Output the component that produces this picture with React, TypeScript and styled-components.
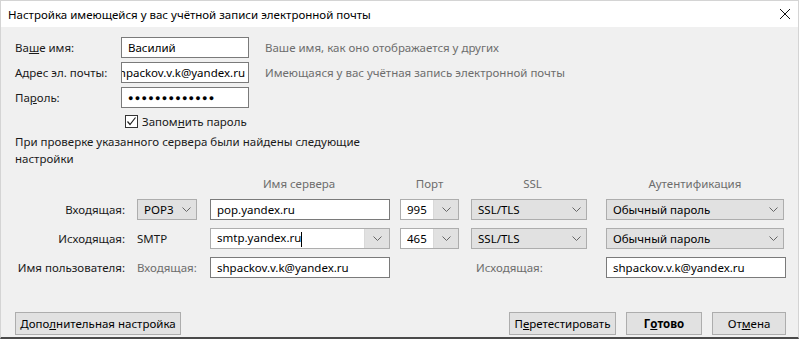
import React from 'react';
import styled, { createGlobalStyle } from 'styled-components';

const GlobalStyle = createGlobalStyle`
  html, body {
    margin: 0;
    padding: 0;
    background: #f0f0f0;
  }
  body {
    font-family: 'Noto Sans', 'Open Sans', sans-serif;
    font-size: 11.5px;
    color: #1a1a1a;
  }
`;

const Window = styled.div`
  width: 799px;
  height: 339px;
  box-sizing: border-box;
  display: flex;
  flex-direction: column;
  background: #f0f0f0;
  border-left: 1px solid #d4d4d4;
  border-right: 1px solid #d4d4d4;
  border-top: 1px solid #d4d4d4;
  border-bottom: 2px solid #4a4a4a;
  overflow: hidden;
`;

const TitleBar = styled.div`
  height: 26px;
  flex: none;
  background: #fff;
  display: flex;
  align-items: center;
  justify-content: space-between;
  padding: 0 7px 0 7px;
  font-size: 11.5px;
  color: #000;
`;

const CloseButton = styled.div`
  width: 12px;
  height: 12px;
  display: flex;
`;

const Content = styled.div`
  flex: 1;
  display: flex;
  flex-direction: column;
  padding: 10px 0 0 14px;
`;

const AccountGrid = styled.div`
  display: grid;
  grid-template-columns: 106px 128px auto;
  grid-auto-rows: 21px;
  row-gap: 4px;
  align-items: center;
`;

const Label = styled.span<{ $muted?: boolean; $right?: boolean; $indent?: number }>`
  white-space: nowrap;
  color: ${(p) => (p.$muted ? '#6d6d6d' : '#1a1a1a')};
  text-align: ${(p) => (p.$right ? 'right' : 'left')};
  padding-left: ${(p) => p.$indent ?? 0}px;
`;

const TextBox = styled.div<{ $clipStart?: boolean }>`
  box-sizing: border-box;
  height: 21px;
  width: 100%;
  background: #fff;
  border: 1px solid #7a7a7a;
  display: flex;
  align-items: center;
  justify-content: ${(p) => (p.$clipStart ? 'flex-end' : 'flex-start')};
  padding: 0 3px 0 6px;
  overflow: hidden;
  white-space: nowrap;
  color: #000;
`;

const Dots = styled.span`
  font-size: 9px;
  letter-spacing: 1.3px;
  color: #000;
`;

const Caret = styled.span`
  display: inline-block;
  width: 1px;
  height: 15px;
  background: #000;
  vertical-align: middle;
`;

const CheckRow = styled.label`
  display: flex;
  align-items: center;
  gap: 4px;
  margin: 6px 0 0 110px;
  height: 14px;
`;

const CheckBox = styled.span`
  box-sizing: border-box;
  width: 13px;
  height: 13px;
  border: 1px solid #333;
  background: #fff;
  display: flex;
  align-items: center;
  justify-content: center;
`;

const Note = styled.p`
  margin: 5px 0 0 0;
  line-height: 17px;
`;

const ServerGrid = styled.div`
  display: grid;
  grid-template-columns: 110px 61px 178px 59px 123px 178px;
  grid-template-rows: 16px 21px 21px 21px;
  column-gap: 12px;
  row-gap: 8px;
  align-items: center;
  margin-top: 8px;
`;

const Header = styled.span<{ $col: number }>`
  grid-column: ${(p) => p.$col};
  color: #6d6d6d;
  text-align: center;
  white-space: nowrap;
`;

const Select = styled.div<{ $w?: number; $white?: boolean }>`
  box-sizing: border-box;
  height: 21px;
  width: ${(p) => (p.$w ? `${p.$w}px` : '100%')};
  background: ${(p) => (p.$white ? '#fff' : '#e1e1e1')};
  border: 1px solid #adadad;
  display: flex;
  align-items: center;
  padding-left: 6px;
  color: #000;
  white-space: nowrap;
`;

const SelectValue = styled.span`
  flex: 1;
  overflow: hidden;
`;

const Arrow = styled.span<{ $bg?: boolean }>`
  flex: none;
  width: ${(p) => (p.$bg ? '24px' : '20px')};
  height: 100%;
  display: flex;
  align-items: center;
  justify-content: center;
  background: ${(p) => (p.$bg ? '#e1e1e1' : 'transparent')};
  border-left: ${(p) => (p.$bg ? '1px solid #d9d9d9' : 'none')};
`;

const ServerBox = styled(Select)`
  width: 180px;
  border-color: #7a7a7a;
  background: #fff;
`;

const ServerCombo = styled(Select)`
  width: 180px;
  background: #fff;
`;

const Footer = styled.div`
  margin-top: auto;
  display: flex;
  align-items: center;
  gap: 10px;
  padding: 0 12px 2px 0;
`;

const Button = styled.div<{ $w: number; $bold?: boolean }>`
  box-sizing: border-box;
  width: ${(p) => p.$w}px;
  height: 23px;
  background: #e1e1e1;
  border: 1px solid #adadad;
  display: flex;
  align-items: center;
  justify-content: center;
  font-weight: ${(p) => (p.$bold ? 700 : 400)};
  color: #000;
  white-space: nowrap;
`;

const Spacer = styled.div`
  flex: 1;
`;

const Chevron = () => (
  <svg width="9" height="5" viewBox="0 0 9 5">
    <polyline points="0.5,0.5 4.5,4.5 8.5,0.5" fill="none" stroke="#666" strokeWidth="1" />
  </svg>
);

const Combo: React.FC<{ value: string; w?: number }> = ({ value, w }) => (
  <Select $w={w}>
    <SelectValue>{value}</SelectValue>
    <Arrow>
      <Chevron />
    </Arrow>
  </Select>
);

const PortSelect: React.FC<{ value: string }> = ({ value }) => (
  <Select $white>
    <SelectValue>{value}</SelectValue>
    <Arrow $bg>
      <Chevron />
    </Arrow>
  </Select>
);

const App: React.FC = () => (
  <>
    <GlobalStyle />
    <Window>
      <TitleBar>
        <span>Настройка имеющейся у вас учётной записи электронной почты</span>
        <CloseButton>
          <svg width="12" height="12" viewBox="0 0 12 12">
            <path d="M1 1 L11 11 M11 1 L1 11" stroke="#111" strokeWidth="1" />
          </svg>
        </CloseButton>
      </TitleBar>
      <Content>
        <AccountGrid>
          <Label>
            Ва<u>ш</u>е имя:
          </Label>
          <TextBox>Василий</TextBox>
          <Label $muted $indent={16}>
            Ваше имя, как оно отображается у других
          </Label>
          <Label>
            А<u>д</u>рес эл. почты:
          </Label>
          <TextBox $clipStart>shpackov.v.k@yandex.ru</TextBox>
          <Label $muted $indent={16}>
            Имеющаяся у вас учётная запись электронной почты
          </Label>
          <Label>
            Па<u>р</u>оль:
          </Label>
          <TextBox>
            <Dots>●●●●●●●●●●●●●</Dots>
          </TextBox>
        </AccountGrid>

        <CheckRow>
          <CheckBox>
            <svg width="11" height="11" viewBox="0 0 11 11">
              <polyline points="1.5,5.5 4,8.5 9.5,1.5" fill="none" stroke="#222" strokeWidth="1.2" />
            </svg>
          </CheckBox>
          <span>
            Запом<u>н</u>ить пароль
          </span>
        </CheckRow>

        <Note>
          При проверке указанного сервера были найдены следующие
          <br />
          настройки
        </Note>

        <ServerGrid>
          <Header $col={3}>Имя сервера</Header>
          <Header $col={4}>Порт</Header>
          <Header $col={5}>SSL</Header>
          <Header $col={6}>Аутентификация</Header>

          <Label $right>Входящая:</Label>
          <Combo value="POP3" w={60} />
          <ServerBox>pop.yandex.ru</ServerBox>
          <PortSelect value="995" />
          <Combo value="SSL/TLS" w={116} />
          <Combo value="Обычный пароль" />

          <Label $right>Исходящая:</Label>
          <Label>SMTP</Label>
          <ServerCombo>
            <SelectValue>
              smtp.yandex.ru
              <Caret />
            </SelectValue>
            <Arrow $bg>
              <Chevron />
            </Arrow>
          </ServerCombo>
          <PortSelect value="465" />
          <Combo value="SSL/TLS" w={116} />
          <Combo value="Обычный пароль" />

          <Label $right>Имя пользователя:</Label>
          <Label $muted>Входящая:</Label>
          <ServerBox>shpackov.v.k@yandex.ru</ServerBox>
          <span />
          <Label $muted $indent={5}>
            Исходящая:
          </Label>
          <ServerBox>shpackov.v.k@yandex.ru</ServerBox>
        </ServerGrid>

        <Footer>
          <Button $w={166}>
            Допо<u>л</u>нительная настройка
          </Button>
          <Spacer />
          <Button $w={107}>
            П<u>е</u>ретестировать
          </Button>
          <Button $w={76} $bold>
            Г<u>о</u>тово
          </Button>
          <Button $w={74}>
            От<u>м</u>ена
          </Button>
        </Footer>
      </Content>
    </Window>
  </>
);

export default App;
